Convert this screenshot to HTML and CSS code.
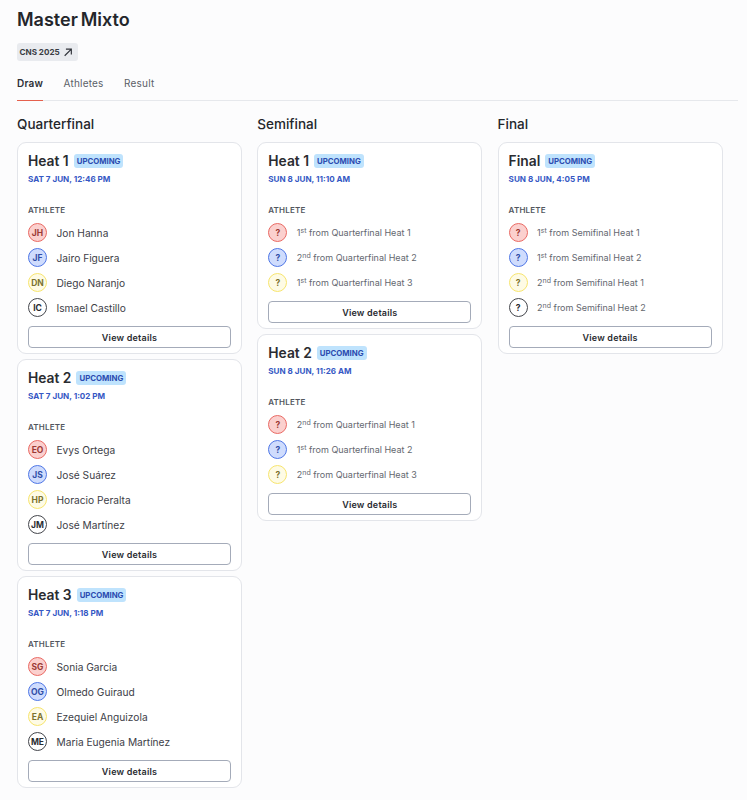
FILE: index.html
```html
<!DOCTYPE html>
<html lang="en">
<head>
<meta charset="utf-8">
<title>Master Mixto</title>
<link rel="stylesheet" href="styles.css">
</head>
<body>
<main class="page">
  <h1 class="title">Master Mixto</h1>
  <a class="tag">CNS 2025 <svg class="tag-icon" viewBox="0 0 12 12"><path d="M2 10.5 10 2.5M3.5 2.5H10V9"/></svg></a>
  <nav class="tabs">
    <span class="tab active">Draw</span>
    <span class="tab">Athletes</span>
    <span class="tab">Result</span>
  </nav>
  <div class="rounds">
    <section class="round">
      <h2 class="round-title">Quarterfinal</h2>
      <div class="stack">
        <article class="card">
          <header class="card-head"><h3>Heat 1</h3><span class="badge">UPCOMING</span></header>
          <p class="date">SAT 7 JUN, 12:46 PM</p>
          <p class="label">ATHLETE</p>
          <ul class="list">
            <li><span class="av red">JH</span>Jon Hanna</li>
            <li><span class="av blue">JF</span>Jairo Figuera</li>
            <li><span class="av yellow">DN</span>Diego Naranjo</li>
            <li><span class="av black">IC</span>Ismael Castillo</li>
          </ul>
          <button class="btn">View details</button>
        </article>
        <article class="card">
          <header class="card-head"><h3>Heat 2</h3><span class="badge">UPCOMING</span></header>
          <p class="date">SAT 7 JUN, 1:02 PM</p>
          <p class="label">ATHLETE</p>
          <ul class="list">
            <li><span class="av red">EO</span>Evys Ortega</li>
            <li><span class="av blue">JS</span>José Suárez</li>
            <li><span class="av yellow">HP</span>Horacio Peralta</li>
            <li><span class="av black">JM</span>José Martínez</li>
          </ul>
          <button class="btn">View details</button>
        </article>
        <article class="card">
          <header class="card-head"><h3>Heat 3</h3><span class="badge">UPCOMING</span></header>
          <p class="date">SAT 7 JUN, 1:18 PM</p>
          <p class="label">ATHLETE</p>
          <ul class="list">
            <li><span class="av red">SG</span>Sonia Garcia</li>
            <li><span class="av blue">OG</span>Olmedo Guiraud</li>
            <li><span class="av yellow">EA</span>Ezequiel Anguizola</li>
            <li><span class="av black">ME</span>Maria Eugenia Martínez</li>
          </ul>
          <button class="btn">View details</button>
        </article>
      </div>
    </section>
    <section class="round">
      <h2 class="round-title">Semifinal</h2>
      <div class="stack">
        <article class="card">
          <header class="card-head"><h3>Heat 1</h3><span class="badge">UPCOMING</span></header>
          <p class="date">SUN 8 JUN, 11:10 AM</p>
          <p class="label">ATHLETE</p>
          <ul class="list pending">
            <li><span class="av red">?</span><span>1<sup>st</sup> from Quarterfinal Heat 1</span></li>
            <li><span class="av blue">?</span><span>2<sup>nd</sup> from Quarterfinal Heat 2</span></li>
            <li><span class="av yellow">?</span><span>1<sup>st</sup> from Quarterfinal Heat 3</span></li>
          </ul>
          <button class="btn">View details</button>
        </article>
        <article class="card">
          <header class="card-head"><h3>Heat 2</h3><span class="badge">UPCOMING</span></header>
          <p class="date">SUN 8 JUN, 11:26 AM</p>
          <p class="label">ATHLETE</p>
          <ul class="list pending">
            <li><span class="av red">?</span><span>2<sup>nd</sup> from Quarterfinal Heat 1</span></li>
            <li><span class="av blue">?</span><span>1<sup>st</sup> from Quarterfinal Heat 2</span></li>
            <li><span class="av yellow">?</span><span>2<sup>nd</sup> from Quarterfinal Heat 3</span></li>
          </ul>
          <button class="btn">View details</button>
        </article>
      </div>
    </section>
    <section class="round">
      <h2 class="round-title">Final</h2>
      <div class="stack">
        <article class="card">
          <header class="card-head"><h3>Final</h3><span class="badge">UPCOMING</span></header>
          <p class="date">SUN 8 JUN, 4:05 PM</p>
          <p class="label">ATHLETE</p>
          <ul class="list pending">
            <li><span class="av red">?</span><span>1<sup>st</sup> from Semifinal Heat 1</span></li>
            <li><span class="av blue">?</span><span>1<sup>st</sup> from Semifinal Heat 2</span></li>
            <li><span class="av yellow">?</span><span>2<sup>nd</sup> from Semifinal Heat 1</span></li>
            <li><span class="av black">?</span><span>2<sup>nd</sup> from Semifinal Heat 2</span></li>
          </ul>
          <button class="btn">View details</button>
        </article>
      </div>
    </section>
  </div>
</main>
</body>
</html>
```
FILE: styles.css
```css
* { box-sizing: border-box; }
html, body { margin: 0; padding: 0; }
body {
  background: #fcfcfd;
  color: #1f2228;
  font-family: Inter, "Liberation Sans", sans-serif;
  height: 800px;
  overflow: hidden;
}
.page { padding: 8px 9px 0 17px; }
.title {
  margin: 0;
  font-size: 18px;
  line-height: 23px;
  font-weight: 600;
  color: #24262b;
  word-spacing: -1.7px;
}
.tag {
  display: inline-flex;
  align-items: center;
  gap: 3px;
  margin-top: 12px;
  height: 18px;
  padding: 0 5px 0 2.5px;
  background: #e9ebef;
  border-radius: 3px;
  font-size: 8.1px;
  font-weight: 700;
  color: #3a3d44;
}
.tag-icon { width: 10px; height: 10px; fill: none; stroke: #30333a; stroke-width: 1.4; }
.tabs {
  display: flex;
  gap: 20.5px;
  margin-top: 8px;
  height: 32px;
  border-bottom: 1px solid #e6e8ec;
  font-size: 10px;
  letter-spacing: 0.2px;
  color: #5b5f68;
}
.tab { padding-top: 8px; height: 32px; }
.tab.active {
  color: #2c2f36;
  font-weight: 600;
  border-bottom: 1.5px solid #e5604d;
}
.rounds {
  display: grid;
  grid-template-columns: repeat(3, 225px);
  column-gap: 15.3px;
  margin-top: 15px;
}
.round-title {
  margin: 0 0 9px;
  font-size: 13.5px;
  line-height: 17px;
  font-weight: 500;
  color: #24262b;
}
.stack { display: flex; flex-direction: column; gap: 5.2px; }
.card {
  background: #fff;
  border: 1px solid #e3e5ea;
  border-radius: 9px;
  padding: 8.5px 10px 5px;
}
.card-head { display: flex; align-items: center; gap: 5px; height: 18px; }
.card-head h3 {
  margin: 0;
  font-size: 13.8px;
  line-height: 18px;
  font-weight: 600;
  color: #2a2c31;
}
.badge {
  height: 14px;
  padding: 0 3px;
  line-height: 14px;
  background: #bfe3fd;
  border-radius: 3px;
  font-size: 7.8px;
  font-weight: 700;
  color: #2b4bb0;
}
.date {
  margin: 4px 0 0;
  font-size: 8.1px;
  line-height: 10px;
  font-weight: 700;
  color: #3558c4;
}
.label {
  margin: 21.5px 0 0;
  font-size: 8px;
  line-height: 10px;
  font-weight: 600;
  letter-spacing: 0.2px;
  color: #52565e;
}
.list { list-style: none; margin: 5px 0 0; padding: 0; }
.list li {
  display: flex;
  align-items: center;
  gap: 9.5px;
  height: 25px;
  font-size: 10.2px;
  color: #3d4047;
}
.list.pending li { color: #64676f; font-size: 9px; }
.list sup { font-size: 7px; line-height: 0; vertical-align: 3px; }
.av {
  flex: none;
  display: flex;
  align-items: center;
  justify-content: center;
  width: 19px;
  height: 19px;
  border-radius: 50%;
  border: 1.3px solid;
  font-size: 8.5px;
  font-weight: 700;
}
.red { background: #fbd0ce; border-color: #ea6a64; color: #9c3a36; }
.blue { background: #cfdcfd; border-color: #4f77e6; color: #2f4ea8; }
.yellow { background: #fefbe5; border-color: #f7e56e; color: #7c7330; }
.black { background: #fff; border-color: #44464c; color: #2a2c31; }
.btn {
  display: block;
  width: 100%;
  height: 22px;
  margin-top: 6px;
  background: #fff;
  border: 1px solid #a4abb9;
  border-radius: 4px;
  font: 600 9px Inter, "Liberation Sans", sans-serif;
  letter-spacing: 0.2px;
  color: #2a2c31;
}
```
